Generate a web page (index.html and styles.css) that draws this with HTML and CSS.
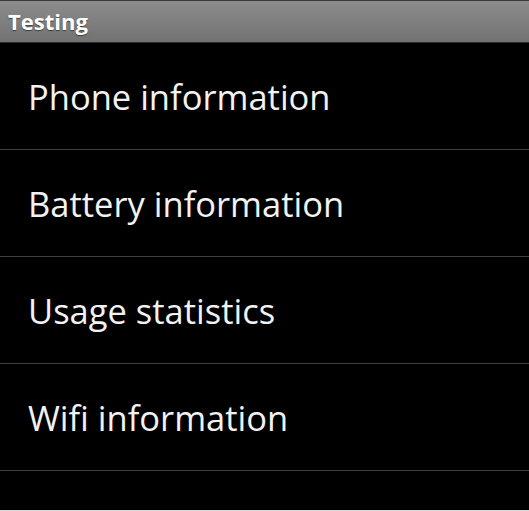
FILE: index.html
```html
<!DOCTYPE html>
<html>
<head>
  <link rel="stylesheet" href="styles.css">
</head>
<body>
  <div class="title-bar">Testing</div>
  <ul class="menu">
    <li>Phone information</li>
    <li>Battery information</li>
    <li>Usage statistics</li>
    <li>Wifi information</li>
  </ul>
</body>
</html>
```

FILE: styles.css
```css
html, body {
  margin: 0;
  height: 100%;
}
body {
  background-color: #000;
  font-family: "Open Sans", "Noto Sans", sans-serif;
  color: #f2f2f2;
  overflow: hidden;
  box-sizing: border-box;
  border-bottom: 1px solid #d8d8d8;
}
.title-bar {
  height: 41px;
  line-height: 40px;
  border-top: 1px solid #3a3a3a;
  border-bottom: 1px solid #2a2a2a;
  background: linear-gradient(#8c8c8c, #727272);
  color: #fff;
  font-weight: bold;
  font-size: 22px;
  padding-left: 8px;
  text-shadow: 0 1px 1px rgba(0,0,0,0.5);
}
.menu {
  list-style: none;
  margin: 0;
  padding: 0;
}
.menu li {
  height: 106px;
  line-height: 108px;
  padding-left: 28px;
  font-size: 34.5px;
  border-bottom: 1px solid #404040;
}
```
